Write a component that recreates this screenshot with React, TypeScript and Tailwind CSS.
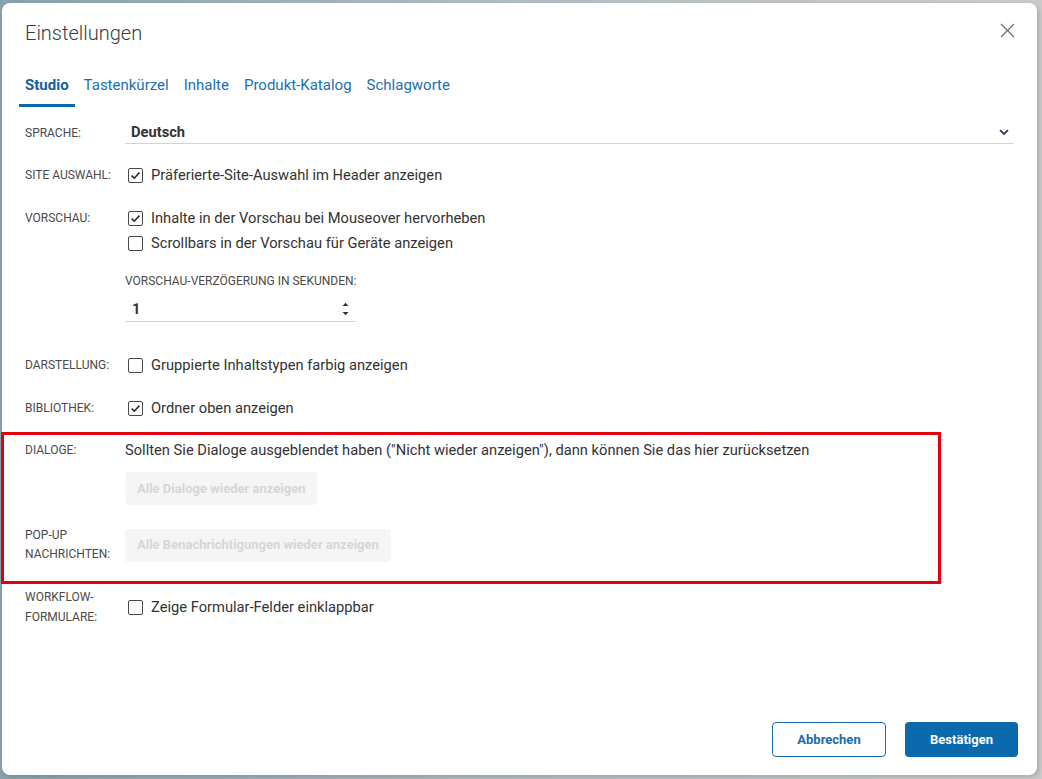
import React from 'react';

const Check = ({ checked }: { checked?: boolean }) => (
    <span className="flex h-[15px] w-[15px] shrink-0 items-center justify-center rounded-[2px] border-[1.5px] border-[#474747] bg-white">
        {checked && (
            <svg width="11" height="11" viewBox="0 0 11 11" fill="none">
                <path d="M1.6 5.6 L4.3 8.2 L9.4 2.6" stroke="#2b2b2b" strokeWidth="1.6" />
            </svg>
        )}
    </span>
);

const CheckRow = ({ checked, children }: { checked?: boolean; children: React.ReactNode }) => (
    <div className="flex h-[20px] items-center gap-[8px] pl-[3px] text-[14.7px] text-[#333]">
        <Check checked={checked} />
        <span>{children}</span>
    </div>
);

const Label = ({ children }: { children: React.ReactNode }) => (
    <div className="w-[100px] shrink-0 text-[12px] leading-[20px] text-[#4a4a4a] uppercase">{children}</div>
);

const tabs = ['Studio', 'Tastenkürzel', 'Inhalte', 'Produkt-Katalog', 'Schlagworte'];

export default function App() {
    return (
        <div className="h-screen w-full overflow-hidden bg-gradient-to-r from-[#86a2ad] via-[#b3bec3] to-[#cacaca] pl-[2px] pt-[3px] font-['Roboto',sans-serif]">
            <div className="relative flex h-[772px] w-[1035px] flex-col rounded-lg bg-white px-[23px] pb-[18px] pt-[16px] shadow-[2px_2px_4px_rgba(0,0,0,0.15)]">
                {/* header */}
                <div className="flex items-start justify-between">
                    <h1 className="text-[20px] font-light leading-[28px] text-[#3c3c3c]">Einstellungen</h1>
                    <svg className="mt-[4px] -mr-[1px]" width="15" height="15" viewBox="0 0 15 15" fill="none">
                        <path d="M1 1 L14 14 M14 1 L1 14" stroke="#6b6b6b" strokeWidth="1.1" />
                    </svg>
                </div>

                {/* tabs */}
                <div className="-ml-[6px] mt-[28px] flex gap-[3px]">
                    {tabs.map((t, i) => (
                        <div
                            key={t}
                            className={
                                i === 0
                                    ? 'border-b-[3px] border-[#0b69ad] px-[6px] pb-[9px] text-[15px] font-bold leading-[20px] text-[#145f9c]'
                                    : 'border-b-[3px] border-transparent px-[6px] pb-[9px] text-[15px] leading-[20px] text-[#1b70b0]'
                            }
                        >
                            {t}
                        </div>
                    ))}
                </div>

                {/* Sprache */}
                <div className="mt-[11px] flex h-[26px] items-center">
                    <div className="w-[100px] shrink-0 pt-[3px] text-[12px] leading-[20px] text-[#4a4a4a]">SPRACHE:</div>
                    <div className="flex h-full flex-1 items-center justify-between border-b border-[#d4d4d4] pl-[6px] pr-[5px] pt-[3px]">
                        <span className="text-[14.7px] font-bold text-[#333]">Deutsch</span>
                        <svg width="10" height="7" viewBox="0 0 10 7" fill="none">
                            <path d="M1 1.2 L5 5 L9 1.2" stroke="#2a3d55" strokeWidth="1.8" />
                        </svg>
                    </div>
                </div>

                {/* Site Auswahl */}
                <div className="mt-[21px] flex">
                    <Label>Site Auswahl:</Label>
                    <CheckRow checked>Präferierte-Site-Auswahl im Header anzeigen</CheckRow>
                </div>

                {/* Vorschau */}
                <div className="mt-[23px] flex">
                    <Label>Vorschau:</Label>
                    <div className="flex flex-col">
                        <div className="flex flex-col gap-[5px]">
                            <CheckRow checked>Inhalte in der Vorschau bei Mouseover hervorheben</CheckRow>
                            <CheckRow>Scrollbars in der Vorschau für Geräte anzeigen</CheckRow>
                        </div>
                        <div className="mt-[18px] text-[12px] leading-[20px] text-[#4a4a4a]">VORSCHAU-VERZÖGERUNG IN SEKUNDEN:</div>
                        <div className="mt-[6px] flex h-[25px] w-[231px] items-center justify-between border-b border-[#d4d4d4] pl-[7px] pr-[7px]">
                            <span className="text-[14.7px] font-bold text-[#333]">1</span>
                            <svg width="7" height="14" viewBox="0 0 7 14" fill="#333">
                                <path d="M0.5 4 L3.5 0.8 L6.5 4 Z" />
                                <path d="M0.5 10 L3.5 13.2 L6.5 10 Z" />
                            </svg>
                        </div>
                    </div>
                </div>

                {/* Darstellung */}
                <div className="mt-[33px] flex">
                    <Label>Darstellung:</Label>
                    <CheckRow>Gruppierte Inhaltstypen farbig anzeigen</CheckRow>
                </div>

                {/* Bibliothek */}
                <div className="mt-[23px] flex">
                    <Label>Bibliothek:</Label>
                    <CheckRow checked>Ordner oben anzeigen</CheckRow>
                </div>

                {/* Dialoge */}
                <div className="mt-[22px] flex">
                    <Label>Dialoge:</Label>
                    <div className="flex flex-col items-start">
                        <p className="text-[14.7px] leading-[20px] text-[#333]">
                            Sollten Sie Dialoge ausgeblendet haben ("Nicht wieder anzeigen"), dann können Sie das hier zurücksetzen
                        </p>
                        <button className="mt-[12px] h-[33px] rounded-[4px] bg-[#f5f5f5] px-[12px] text-[13px] font-bold text-[#d6d6d6]">
                            Alle Dialoge wieder anzeigen
                        </button>
                    </div>
                </div>

                {/* Pop-up */}
                <div className="mt-[21px] flex items-center">
                    <div className="w-[100px] shrink-0 text-[12px] leading-[19px] text-[#4a4a4a]">
                        POP-UP
                        <br />
                        NACHRICHTEN:
                    </div>
                    <button className="h-[33px] rounded-[4px] bg-[#f5f5f5] px-[12px] text-[13px] font-bold text-[#d6d6d6]">
                        Alle Benachrichtigungen wieder anzeigen
                    </button>
                </div>

                {/* Workflow */}
                <div className="mt-[23px] flex items-center">
                    <div className="w-[100px] shrink-0 text-[12px] leading-[20px] text-[#4a4a4a]">
                        WORKFLOW-
                        <br />
                        FORMULARE:
                    </div>
                    <CheckRow>Zeige Formular-Felder einklappbar</CheckRow>
                </div>

                {/* footer */}
                <div className="-mr-[4px] mt-auto flex justify-end gap-[19px]">
                    <button className="h-[35px] w-[114px] rounded-[4px] border border-[#1a6dab] text-[13px] font-bold text-[#1a6dab]">
                        Abbrechen
                    </button>
                    <button className="h-[35px] w-[113px] rounded-[4px] bg-[#0b69ad] text-[13px] font-bold text-white">
                        Bestätigen
                    </button>
                </div>

                {/* annotation highlight */}
                <div className="pointer-events-none absolute left-[-1px] top-[429px] h-[152px] w-[940px] border-[3px] border-[#e3000f]" />
            </div>
        </div>
    );
}
